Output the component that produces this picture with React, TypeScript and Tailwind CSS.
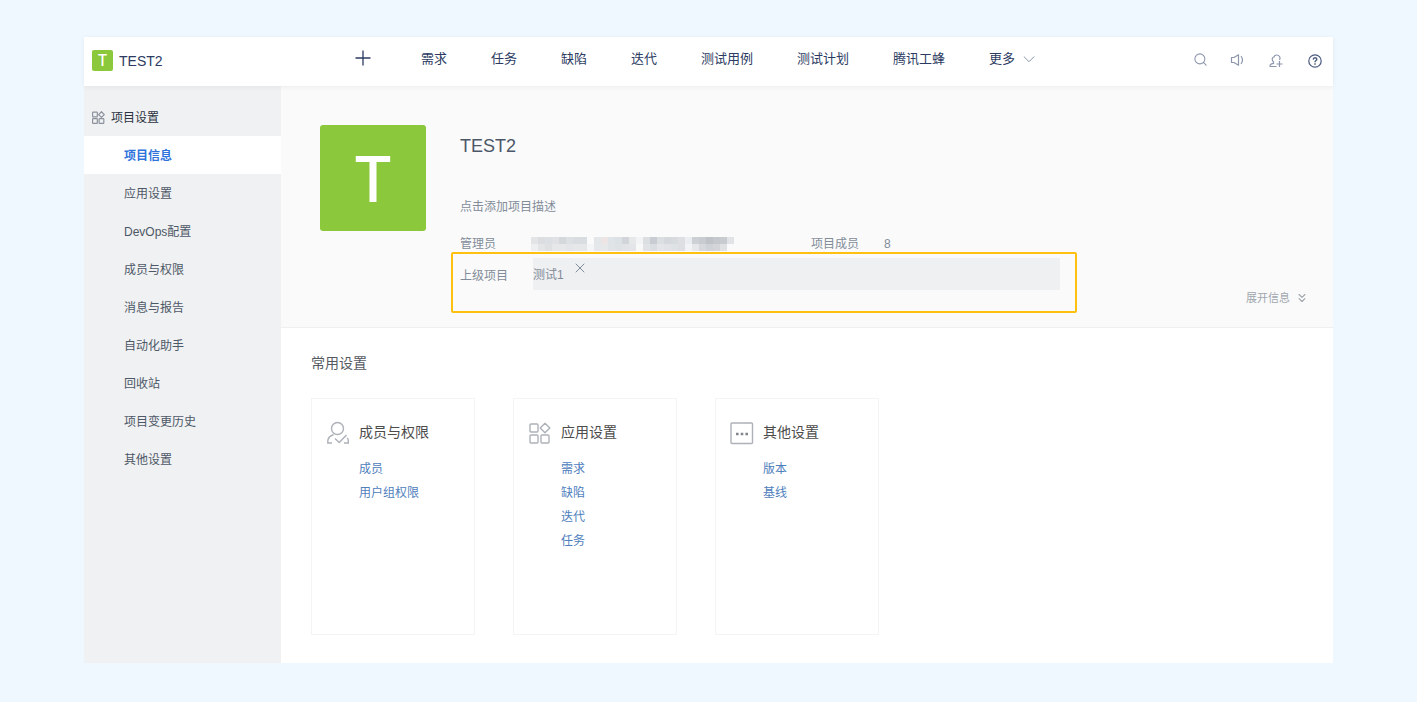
import { ChevronsDown, Search, X } from 'lucide-react';

interface SettingCard {
  readonly title: string;
  readonly icon: React.ReactElement;
  readonly links: readonly string[];
}

const NAV_ITEMS = ['需求', '任务', '缺陷', '迭代', '测试用例', '测试计划', '腾讯工蜂'];

const SIDEBAR_ITEMS = [
  '项目信息',
  '应用设置',
  'DevOps配置',
  '成员与权限',
  '消息与报告',
  '自动化助手',
  '回收站',
  '项目变更历史',
  '其他设置',
];

// Two rows of blocks that hide the names of the administrators
const MASK_ROWS = [
  ['#e3e4e6', '#dcdde0', '#dcdfe3', '#e0e1e4', '#d5d8db', '#dde0e3', '#d9dce0', '#dadde0', '#fafafa', '#e4e7ea', '#ece5e4', '#dfe4e8', '#dce1e5', '#d1d4d8', '#e6e8ea', '#f3f4f5', '#dcdfe2', '#c9cdd3', '#dcdfe2', '#d5d8dc', '#d8dbde', '#dddfe2', '#ebeef1', '#cdd0d4', '#c8cbcf', '#bfc2c7', '#c5c8cc', '#c8cbd0', '#e2e3e6'],
  ['#eeeff0', '#e3e5e7', '#dee0e2', '#e6e7e9', '#e7e8ea', '#e3e5e8', '#e5e7e9', '#e5e7e9', '#f3f5f7', '#e5e7ea', '#e6e8ea', '#e0e4e7', '#dfe2e5', '#e1e3e6', '#e4e5e8', '#f8f8f8', '#e0e2e5', '#dbdee1', '#e4e5e8', '#e1e3e6', '#dfe2e5', '#dddfe2', '#f1f3f5', '#e6e7e9', '#d6d8dc', '#cfd2d6', '#d3d5d9', '#dfe1e3', '#fafafa'],
];

function AppsIcon({ className, strokeWidth }: { readonly className: string; readonly strokeWidth: number }): React.ReactElement {
  return (
    <svg viewBox="0 0 22 22" fill="none" stroke="currentColor" strokeWidth={strokeWidth} className={className} aria-hidden="true">
      <rect x="1" y="2" width="8" height="8" rx="1" />
      <rect x="1" y="13" width="8" height="8" rx="1" />
      <rect x="12" y="13" width="8" height="8" rx="1" />
      <path d="M16 1.2 L20.8 6 L16 10.8 L11.2 6 Z" strokeLinejoin="round" />
    </svg>
  );
}

function MemberIcon(): React.ReactElement {
  return (
    <svg viewBox="0 0 24 24" fill="none" stroke="currentColor" strokeWidth="1.4" className="size-6 shrink-0" aria-hidden="true">
      <circle cx="11.500" cy="7.5" r="6" />
      <path d="M6 22H1.800V20C1.800 17.500 4 15 7.500 13.500" />
      <path d="M18 22h4.300v-2.500c0-1-.4-1.900-1-2.700" />
      <path d="M9 17.500l4.200 4 7.300-7.500" />
    </svg>
  );
}

function MoreIcon(): React.ReactElement {
  return (
    <svg viewBox="0 0 24 24" fill="none" stroke="currentColor" strokeWidth="1.4" className="size-6 shrink-0" aria-hidden="true">
      <rect x="1" y="2" width="21.5" height="20.5" rx="1" />
      <path d="M6 13h2.600M10.700 13h2.600M15.400 13H18" stroke="#82868d" strokeWidth="2.400" />
    </svg>
  );
}

const CARDS: readonly SettingCard[] = [
  { title: '成员与权限', icon: <MemberIcon />, links: ['成员', '用户组权限'] },
  { title: '应用设置', icon: <AppsIcon strokeWidth={1.4} className="mx-px mt-px size-[22px] shrink-0" />, links: ['需求', '缺陷', '迭代', '任务'] },
  { title: '其他设置', icon: <MoreIcon />, links: ['版本', '基线'] },
];

function Header(): React.ReactElement {
  return (
    <header className="relative z-10 flex h-[49px] items-center bg-white pr-[11px] pb-0.5 pl-2 text-[#2c3b62] shadow-[0_1px_5px_rgba(0,0,0,0.06)]">
      <a href="#" className="flex w-[263px] items-center gap-[6px] text-sm">
        <span className="flex size-[21px] items-center justify-center rounded-xs bg-[#8bc83b] pb-0.5 font-['Noto_Sans'] text-base font-medium text-white">T</span>
        TEST2
      </a>
      <nav className="flex items-center gap-11 pb-1 text-[13px]">
        <button type="button" aria-label="新建" className="mr-[6px] pb-0.5">
          <svg viewBox="0 0 16 16" fill="none" stroke="currentColor" strokeWidth="1.3" className="size-4">
            <path d="M8 .5v15M.5 8h15" />
          </svg>
        </button>
        {NAV_ITEMS.map((item) => (
          <a key={item} href="#">{item}</a>
        ))}
        <button type="button" className="flex items-center gap-2">
          更多
          <svg viewBox="0 0 12 12" fill="none" stroke="#8a94a8" className="size-3">
            <path d="M.8 3.5L6 8.7l5.2-5.2" />
          </svg>
        </button>
      </nav>
      <div className="ml-auto flex items-center gap-[22px] text-[#8d96ad]">
        <button type="button" aria-label="搜索" className="pb-0.5">
          <Search className="size-[15px]" strokeWidth={1.7} />
        </button>
        <button type="button" aria-label="公告" className="pb-0.5">
          <svg viewBox="0 0 14 14" fill="none" stroke="currentColor" strokeWidth="1.2" strokeLinejoin="round" className="size-[14px]">
            <path d="M1.500 4.500H4L8.500 1.800v10.400L4 9.500H1.500z" />
            <path d="M11 3q3 4 0 8" />
          </svg>
        </button>
        <button type="button" aria-label="邀请成员" className="ml-[3px]">
          <svg viewBox="0 0 14 14" fill="none" stroke="currentColor" strokeWidth="1.2" className="size-[14px]">
            <path d="M7.500 12.500H1.200c-.6-1.500.3-2.600 3.300-3.200V8C2.300 5.500 3.300 3 5 3c.3-1.400 1.200-2 2.600-2C10.300 1 11.800 3.500 10.500 6" />
            <path d="M10.500 7v6M7.500 10h6" />
          </svg>
        </button>
        <button type="button" aria-label="帮助" className="ml-[3px] text-[#4c5b80]">
          <svg viewBox="0 0 14 14" fill="none" stroke="currentColor" strokeWidth="1.2" className="size-[14px]">
            <circle cx="7" cy="7" r="6.200" />
            <path d="M5.200 5.600C5.300 3 8.800 3.200 8.800 5.300 8.800 6.600 7 6.600 7 8.300M7 9.300v1.400" strokeWidth="1.400" />
          </svg>
        </button>
      </div>
    </header>
  );
}

function Sidebar(): React.ReactElement {
  return (
    <aside className="w-[197px] shrink-0 bg-[#f0f1f3] text-xs text-[#4d5866]">
      <h2 className="flex h-[50px] items-center gap-[6px] pt-[14px] pl-2 text-[#2b3340]">
        <AppsIcon strokeWidth={2} className="mb-0.5 size-[13px] text-[#8b929d]" />
        项目设置
      </h2>
      <ul>
        {SIDEBAR_ITEMS.map((item, index) => (
          <li key={item}>
            <a
              href="#"
              className={
                index === 0
                  ? 'flex h-[38px] items-center bg-white pt-0.5 pl-10 font-bold text-[#2f72dc]'
                  : 'flex h-[38px] items-center pt-0.5 pl-10'
              }
            >
              {item}
            </a>
          </li>
        ))}
      </ul>
    </aside>
  );
}

function ProjectInfo(): React.ReactElement {
  return (
    <section className="flex min-h-[242px] items-start border-b border-[#eeeff1] bg-[#fafafa] pt-[39px] pr-6 pl-[39px] text-xs text-[#828c99]">
      <div className="flex size-[106px] shrink-0 items-center justify-center rounded-[3px] bg-[#8bc83b] font-['Noto_Sans'] text-[64px] leading-none font-medium text-white">
        T
      </div>
      <div className="ml-[25px] max-w-[626px] flex-1">
        <div className="px-[9px]">
          <h1 className="pt-[7px] text-lg leading-7 text-[#4b5768]">TEST2</h1>
          <p className="mt-[37px] leading-5">点击添加项目描述</p>
          <div className="mt-[18px] flex h-[17px] items-center">
            <span className="w-[71px]">管理员</span>
            <span className="w-[280px]">
              {MASK_ROWS.map((row, index) => (
                <span key={index} className="flex">
                  {row.map((color, cell) => (
                    <span key={cell} className="h-[7px] w-[7px]" style={{ backgroundColor: color }} />
                  ))}
                </span>
              ))}
            </span>
            <span className="w-[73px]">项目成员</span>
            <span>8</span>
          </div>
        </div>
        <div className="flex h-[61px] items-start rounded-xs border-2 border-[#ffc010] pt-1 pr-[15px] pl-[7px]">
          <span className="w-[73px] leading-9">上级项目</span>
          <div className="flex h-8 flex-1 items-start gap-2 bg-[#eff0f2] leading-[34px]">
            测试1
            <button type="button" aria-label="移除" className="pt-0.5">
              <X className="size-4" strokeWidth={1.5} />
            </button>
          </div>
        </div>
      </div>
      <button type="button" className="mt-[164px] ml-auto flex items-center gap-[5px] pt-px text-[11px] leading-4 text-[#a0a6ae]">
        展开信息
        <ChevronsDown className="size-[14px]" />
      </button>
    </section>
  );
}

function CommonSettings(): React.ReactElement {
  return (
    <section className="px-[30px] pt-[23px] pb-7">
      <h2 className="text-sm leading-6 text-[#555a62]">常用设置</h2>
      <div className="mt-[23px] flex flex-wrap gap-[38px]">
        {CARDS.map((card) => (
          <div key={card.title} className="flex min-h-[237px] w-[164px] items-start gap-[9px] border border-[#f4f4f5] pt-[22px] pl-[14px]">
            <span className="text-[#adb1b8]">{card.icon}</span>
            <div>
              <h3 className="text-sm leading-[22px] text-[#4c4c4c]">{card.title}</h3>
              <ul className="mt-[14px] text-xs text-[#4f80bd]">
                {card.links.map((link) => (
                  <li key={link} className="leading-6">
                    <a href="#">{link}</a>
                  </li>
                ))}
              </ul>
            </div>
          </div>
        ))}
      </div>
    </section>
  );
}

export default function App(): React.ReactElement {
  return (
    <div className="flex min-h-screen flex-col bg-[#f0f8ff] px-[84px] pt-[37px] pb-[39px] font-['Liberation_Sans','Noto_Sans_CJK_SC',sans-serif]">
      <Header />
      <div className="flex flex-1 bg-white">
        <Sidebar />
        <main className="min-w-0 flex-1">
          <ProjectInfo />
          <CommonSettings />
        </main>
      </div>
    </div>
  );
}
